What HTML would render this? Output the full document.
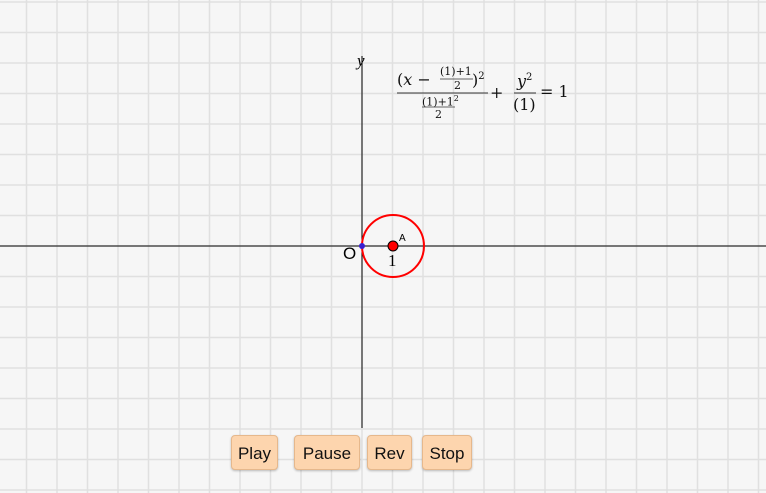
<!DOCTYPE html>
<html><head><style>
body{margin:0;width:766px;height:493px;overflow:hidden;background:#f6f6f6;font-family:"Liberation Sans",sans-serif;position:relative}
.m{position:absolute;font-family:"DejaVu Serif","Liberation Serif",serif;color:#111;white-space:nowrap;line-height:1}
.btn{position:absolute;top:435px;height:35px;background:#fdd5ae;border:1px solid #e6b88c;border-radius:4px;box-shadow:0 1px 2px rgba(0,0,0,.25);font-size:17px;line-height:35px;text-align:center;color:#111;box-sizing:border-box}
</style></head><body>
<svg width="766" height="493" style="position:absolute;left:0;top:0">
<g id="g" stroke="#e0e0e0" stroke-width="1.5"></g>
<line x1="0" y1="246" x2="766" y2="246" stroke="#000" stroke-width="1"/>
<line x1="362" y1="56" x2="362" y2="428" stroke="#000" stroke-width="1"/>
<circle cx="393" cy="246" r="31" fill="none" stroke="#f00" stroke-width="2"/>
<circle cx="393" cy="246" r="5" fill="#f00" stroke="#000" stroke-width="1"/>
<circle cx="362" cy="246" r="3" fill="#3a1fd0"/>
<text x="343" y="259" font-family="Liberation Sans" font-size="17">O</text>
<text x="399" y="241" font-family="Liberation Sans" font-size="10">A</text>
<text x="388" y="266" font-family="Liberation Serif" font-size="17">1</text>
<text x="357" y="66" font-family="Liberation Serif" font-style="italic" font-size="17">y</text>
<line x1="397" y1="93" x2="488" y2="93" stroke="#333" stroke-width="1"/>
<line x1="440" y1="79" x2="473" y2="79" stroke="#333" stroke-width="0.8"/>
<line x1="422" y1="107" x2="455" y2="107" stroke="#333" stroke-width="0.8"/>
<line x1="514" y1="93" x2="536" y2="93" stroke="#333" stroke-width="1"/>
</svg>
<script>
var g=document.getElementById('g'),s='';
for(var k=-12;k<14;k++){var x=362+k*30.5;s+='<line x1="'+x+'" y1="0" x2="'+x+'" y2="493"/>';}
for(var k=-9;k<9;k++){var y=246+k*30.5;s+='<line x1="0" y1="'+y+'" x2="766" y2="'+y+'"/>';}
g.innerHTML=s;
</script>
<div class="m" style="left:397px;top:72px;font-size:16px">(<i>x</i> −</div>
<div class="m" style="left:440px;top:66px;font-size:11px">(1)+1</div>
<div class="m" style="left:454px;top:80px;font-size:11px">2</div>
<div class="m" style="left:472px;top:72px;font-size:16px">)<sup style="font-size:10px">2</sup></div>
<div class="m" style="left:422px;top:95px;font-size:11px">(1)+1<sup style="font-size:8px">2</sup></div>
<div class="m" style="left:435px;top:109px;font-size:11px">2</div>
<div class="m" style="left:490px;top:85px;font-size:16px">+</div>
<div class="m" style="left:517px;top:73px;font-size:16px"><i>y</i><sup style="font-size:10px">2</sup></div>
<div class="m" style="left:513px;top:97px;font-size:16px">(1)</div>
<div class="m" style="left:540px;top:84px;font-size:16px">= 1</div>
<div class="btn" style="left:231px;width:47px">Play</div>
<div class="btn" style="left:294px;width:66px">Pause</div>
<div class="btn" style="left:367px;width:45px">Rev</div>
<div class="btn" style="left:422px;width:50px">Stop</div>
</body></html>
